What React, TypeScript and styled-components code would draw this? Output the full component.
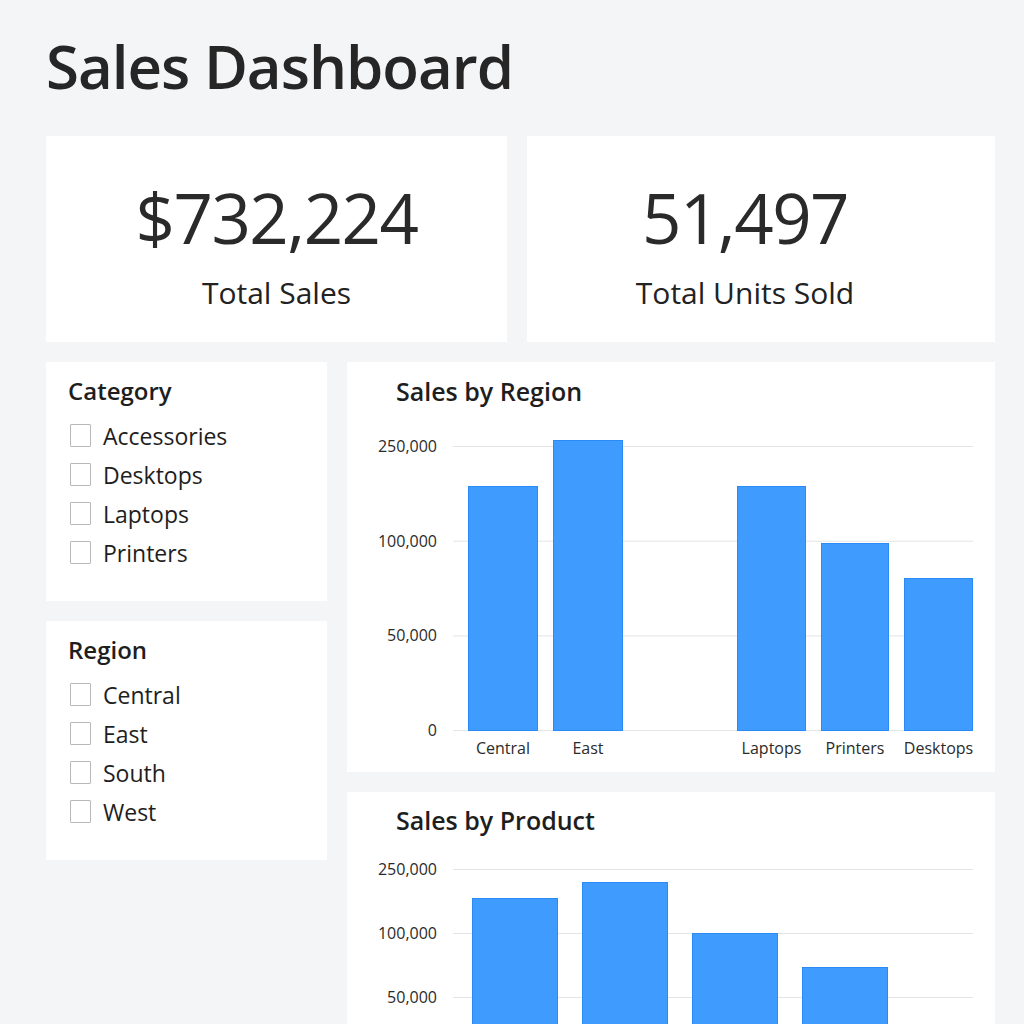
import styled, { createGlobalStyle } from "styled-components";

const GlobalStyle = createGlobalStyle`
  html, body {
    margin: 0;
    padding: 0;
    background: #f4f5f7;
    font-family: "Open Sans", "Noto Sans", "DejaVu Sans", sans-serif;
    color: #252525;
  }
  body {
    height: 1024px;
    overflow: hidden;
  }
`;

type Bar = { label: string; x: number; w: number; top: number };

type ChartProps = {
  title: string;
  ticks: string[];
  tickTop: number;
  tickGap: number;
  base: number;
  bars: Bar[];
  svgHeight: number;
  titleTop: number;
  showLabels?: boolean;
};

const categories = ["Accessories", "Desktops", "Laptops", "Printers"];
const regions = ["Central", "East", "South", "West"];

const regionBars: Bar[] = [
  { label: "Central", x: 121, w: 70, top: 80 },
  { label: "East", x: 206, w: 70, top: 34 },
  { label: "Laptops", x: 390, w: 69, top: 80 },
  { label: "Printers", x: 474, w: 68, top: 137 },
  { label: "Desktops", x: 557, w: 69, top: 172 },
];

const productBars: Bar[] = [
  { label: "Laptops", x: 125, w: 86, top: 63 },
  { label: "Desktops", x: 235, w: 86, top: 47 },
  { label: "Printers", x: 345, w: 86, top: 98 },
  { label: "Accessories", x: 455, w: 86, top: 132 },
];

const BarChart = ({ title, ticks, tickTop, tickGap, base, bars, svgHeight, titleTop, showLabels }: ChartProps) => (
  <ChartCard>
    <ChartTitle $top={titleTop}>{title}</ChartTitle>
    <svg width="648" height={svgHeight} viewBox={`0 0 648 ${svgHeight}`}>
      {ticks.map((t, i) => {
        const y = tickTop + tickGap * i;
        return (
          <g key={t}>
            <line x1="106" x2="626" y1={y + 0.5} y2={y + 0.5} stroke="#e3e4e6" strokeWidth="1" />
            <text x="90" y={y + 6} textAnchor="end" fontSize="16" fill="#2b2b2b" fontFamily="Open Sans, sans-serif">
              {t}
            </text>
          </g>
        );
      })}
      {bars.map((b) => (
        <g key={b.label}>
          <rect
            x={b.x + 0.5}
            y={b.top + 0.5}
            width={b.w - 1}
            height={base - b.top}
            fill="#409bff"
            stroke="#2a8bf7"
            strokeWidth="1"
          />
          {showLabels && (
            <text
              x={b.x + b.w / 2}
              y={base + 24}
              textAnchor="middle"
              fontSize="16"
              fill="#2b2b2b"
              fontFamily="Open Sans, sans-serif"
            >
              {b.label}
            </text>
          )}
        </g>
      ))}
    </svg>
  </ChartCard>
);

const FilterBox = ({ title, items }: { title: string; items: string[] }) => (
  <FilterCard>
    <FilterTitle>{title}</FilterTitle>
    {items.map((item) => (
      <FilterRow key={item}>
        <Check />
        <span>{item}</span>
      </FilterRow>
    ))}
  </FilterCard>
);

export default function App() {
  return (
    <>
      <GlobalStyle />
      <Page>
        <Heading>Sales Dashboard</Heading>
        <KpiRow>
          <KpiCard>
            <KpiValue>$732,224</KpiValue>
            <KpiLabel>Total Sales</KpiLabel>
          </KpiCard>
          <KpiCard $shift={32}>
            <KpiValue>51,497</KpiValue>
            <KpiLabel>Total Units Sold</KpiLabel>
          </KpiCard>
        </KpiRow>
        <MainGrid>
          <Filters>
            <FilterBox title="Category" items={categories} />
            <FilterBox title="Region" items={regions} />
          </Filters>
          <Charts>
            <BarChart
              title="Sales by Region"
              ticks={["250,000", "100,000", "50,000", "0"]}
              tickTop={40}
              tickGap={94.7}
              base={324}
              bars={regionBars}
              svgHeight={366}
              titleTop={14}
              showLabels
            />
            <BarChart
              title="Sales by Product"
              ticks={["250,000", "100,000", "50,000"]}
              tickTop={34}
              tickGap={64}
              base={226}
              bars={productBars}
              svgHeight={240}
              titleTop={13}
            />
          </Charts>
        </MainGrid>
      </Page>
    </>
  );
}

const Page = styled.div`
  width: 949px;
  padding: 28px 0 0 46px;
`;

const Heading = styled.h1`
  margin: 0;
  font-size: 60px;
  line-height: 76px;
  font-weight: 600;
  letter-spacing: -1px;
  color: #262626;
`;

const KpiRow = styled.div`
  display: grid;
  grid-template-columns: 461px 468px;
  gap: 20px;
  margin-top: 32px;
`;

const KpiCard = styled.div<{ $shift?: number }>`
  height: 206px;
  box-sizing: border-box;
  padding: 45px ${(p) => p.$shift ?? 0}px 0 0;
  background: #fff;
  display: flex;
  flex-direction: column;
  align-items: center;
  gap: 22px;
`;

const KpiValue = styled.div`
  font-size: 69px;
  line-height: 72px;
  font-weight: 500;
  letter-spacing: -1.5px;
  color: #2a2a2a;
`;

const KpiLabel = styled.div`
  font-size: 30px;
  line-height: 36px;
  font-weight: 400;
  color: #222;
`;

const MainGrid = styled.div`
  display: grid;
  grid-template-columns: 281px 648px;
  gap: 20px;
  margin-top: 20px;
`;

const Filters = styled.div`
  display: flex;
  flex-direction: column;
  gap: 20px;
`;

const FilterCard = styled.div`
  background: #fff;
  box-sizing: border-box;
  height: 239px;
  padding: 14px 22px 0 24px;
`;

const FilterTitle = styled.div`
  font-size: 24px;
  line-height: 30px;
  font-weight: 600;
  color: #1e1e1e;
  margin: 0 0 10px -2px;
`;

const FilterRow = styled.div`
  display: flex;
  align-items: center;
  gap: 12px;
  height: 39px;
  font-size: 23px;
  color: #1e1e1e;
`;

const Check = styled.span`
  width: 21px;
  height: 23px;
  box-sizing: border-box;
  border: 1px solid #b8b8b8;
  border-radius: 1px;
  background: #fff;
  flex-shrink: 0;
`;

const Charts = styled.div`
  display: flex;
  flex-direction: column;
  gap: 20px;
`;

const ChartCard = styled.div`
  background: #fff;
  display: flex;
  flex-direction: column;
  overflow: hidden;
`;

const ChartTitle = styled.div<{ $top: number }>`
  padding: ${(p) => p.$top}px 0 0 49px;
  font-size: 25px;
  line-height: 30px;
  font-weight: 600;
  color: #1e1e1e;
`;
